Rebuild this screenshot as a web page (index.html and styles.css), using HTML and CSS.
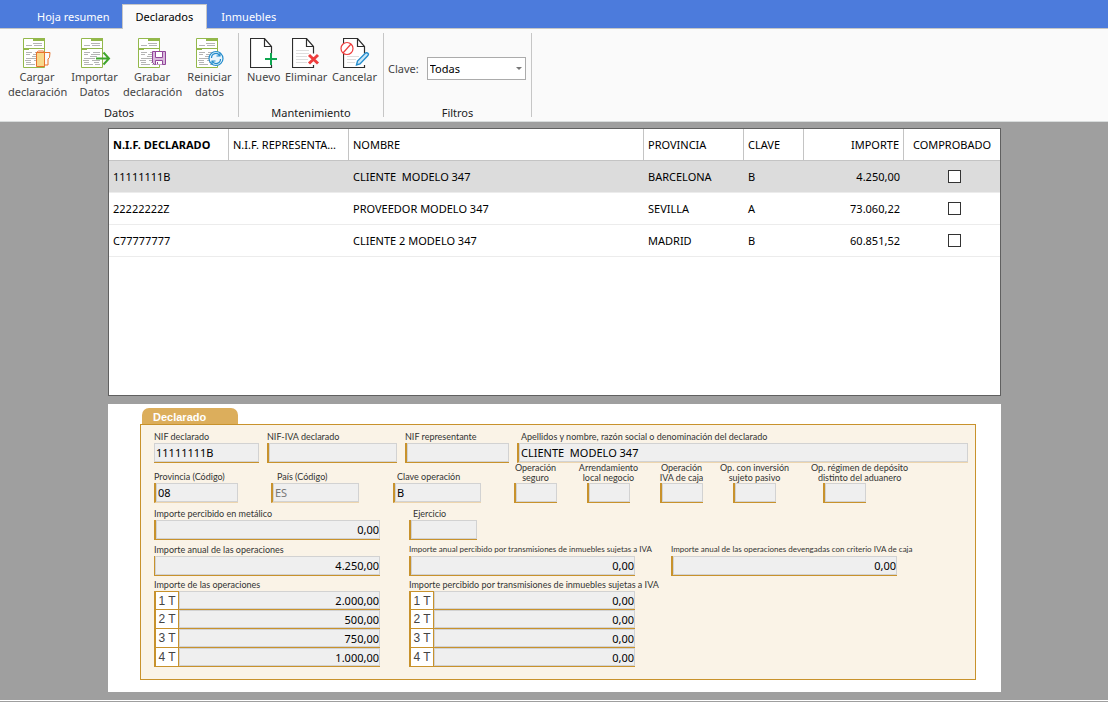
FILE: index.html
```html
<!DOCTYPE html>
<html lang="es">
<head>
<meta charset="utf-8">
<meta name="viewport" content="width=device-width, initial-scale=1">
<title>Modelo 347 - Declarados</title>
<link rel="stylesheet" href="styles.css">
</head>
<body>
<svg class="defs" aria-hidden="true">
  <symbol id="form-doc" viewBox="0 0 28 30">
    <path d="M.5.5h21v29H.5z" fill="#fff" stroke="#93b84b"/>
    <path d="M10 0h12v3H10zM0 10h22v1H0zM0 11h6v1H0z" fill="#93b84b"/>
    <path d="M10 5.5h9M3 7.5h6m2 0h8M3 14.5h6m3 0h7M3 16.5h4m3 0h9M9 18.5h7M3 20.5h11M2 22.5h6m3 0h8M3 24.5h5m5 0h5M3 26.5h9m2 0h5" fill="none" stroke="#b4b4b4"/>
  </symbol>
  <symbol id="blank-doc" viewBox="0 0 28 30">
    <path d="M.5.5h14l7 8v21H.5z" fill="#fff"/>
    <path d="M22 29.5H.5V.5h14l7 8v7M14.500.5v8h7M21.500 27v3" fill="none" stroke="#2d2d2d" stroke-width="1.200"/>
  </symbol>
</svg>

<header>
  <nav class="tabs">
    <a href="#resumen" class="tab">Hoja resumen</a>
    <a href="#declarados" class="tab active" aria-current="page">Declarados</a>
    <a href="#inmuebles" class="tab">Inmuebles</a>
  </nav>
  <div class="ribbon">
    <section class="group datos">
      <div class="tools">
        <button type="button" class="tool"><svg viewBox="0 0 28 30"><use href="#form-doc" width="28" height="30"/><path d="M13.500 14.500h8v14h-8z" fill="#f8d88b" stroke="#e8722c"/><path d="M13.500 14.500l2-1.500h5l1 1.500h5.500l-.5 5-1.500 1.500v6h-3.500" fill="none" stroke="#e8722c"/></svg>Cargar<br>declaración</button>
        <button type="button" class="tool"><svg viewBox="0 0 28 30"><use href="#form-doc" width="28" height="30"/><path d="M15 20.500h13M22.500 14.500l5.500 6-5.500 6" fill="none" stroke="#3fa52c" stroke-width="2"/></svg>Importar<br>Datos</button>
        <button type="button" class="tool"><svg viewBox="0 0 28 30"><use href="#form-doc" width="28" height="30"/><path d="M14.500 13.500h13v13h-11l-2-2z" fill="#d9b9dc" stroke="#91469a"/><path d="M17.500 13.500h7v6h-7zM17.500 26.500v-4h7v4" fill="#fff" stroke="#91469a"/><path d="M19 24h1v2h-1z" fill="#91469a"/></svg>Grabar<br>declaración</button>
        <button type="button" class="tool"><svg viewBox="0 0 28 30"><use href="#form-doc" width="28" height="30"/><circle cx="20" cy="20.500" r="7" fill="#e9f5fc" stroke="#238ccc" stroke-width="1.200"/><path d="M15.500 20c0-5 6-6 8-2.500M24 14.500v3.500h-3.500M24.500 21c0 5-6 6-8 2.500M16 26.500V23h3.500" fill="none" stroke="#238ccc" stroke-width="1.200"/></svg>Reiniciar<br>datos</button>
      </div>
      <h2>Datos</h2>
    </section>
    <section class="group mant">
      <div class="tools">
        <button type="button" class="tool"><svg viewBox="0 0 28 30"><use href="#blank-doc" width="28" height="30"/><path d="M15 21h12M21 15v12" stroke="#0ea650" stroke-width="2"/></svg>Nuevo</button>
        <button type="button" class="tool"><svg viewBox="0 0 28 30"><use href="#blank-doc" width="28" height="30"/><path d="M4 12.500h13M4 15.500h13M4 18.500h11M4 21.500h12M4 24.500h11" stroke="#dedede"/><path d="M17 17l9 8.500M26 17l-9 8.500" stroke="#ee3d3d" stroke-width="3"/></svg>Eliminar</button>
        <button type="button" class="tool"><svg viewBox="0 0 28 30"><use href="#blank-doc" x="2" width="28" height="30"/><path d="M6 18.500h12M6 21.500h9M6 24.500h8" stroke="#dedede"/><circle cx="6" cy="10.500" r="6" fill="#fff" stroke="#ee3d3d" stroke-width="1.200"/><path d="M2 15l8-9" stroke="#ee3d3d" stroke-width="1.200"/><path d="M15.500 27l1-4 8-8q2-1 3 1 0 1-1 2l-7.500 8z" fill="#c9e6f8" stroke="#238ccc" stroke-width="1.400"/></svg>Cancelar</button>
      </div>
      <h2>Mantenimiento</h2>
    </section>
    <section class="group filtros">
      <div class="filter">
        <label for="clave">Clave:</label>
        <span class="select"><select id="clave"><option>Todas</option></select></span>
      </div>
      <h2>Filtros</h2>
    </section>
  </div>
</header>

<main>
  <div class="grid-panel">
    <table>
      <colgroup><col class="c120"><col class="c120"><col><col class="c100"><col class="c60"><col class="c100"><col class="c96"></colgroup>
      <thead>
        <tr><th class="sorted">N.I.F. DECLARADO</th><th>N.I.F. REPRESENTANTE</th><th>NOMBRE</th><th>PROVINCIA</th><th>CLAVE</th><th class="num">IMPORTE</th><th class="check">COMPROBADO</th></tr>
      </thead>
      <tbody>
        <tr class="selected"><td>11111111B</td><td></td><td>CLIENTE&nbsp; MODELO 347</td><td>BARCELONA</td><td>B</td><td class="num">4.250,00</td><td class="check"><input type="checkbox" aria-label="Comprobado 11111111B"></td></tr>
        <tr><td>22222222Z</td><td></td><td>PROVEEDOR MODELO 347</td><td>SEVILLA</td><td>A</td><td class="num">73.060,22</td><td class="check"><input type="checkbox" aria-label="Comprobado 22222222Z"></td></tr>
        <tr><td>C77777777</td><td></td><td>CLIENTE 2 MODELO 347</td><td>MADRID</td><td>B</td><td class="num">60.851,52</td><td class="check"><input type="checkbox" aria-label="Comprobado C77777777"></td></tr>
      </tbody>
    </table>
  </div>

  <form class="card">
    <h1>Declarado</h1>
    <div class="sheet">
      <div class="row identity">
        <div class="field"><label for="nif">NIF declarado</label><input id="nif" class="flat" value="11111111B"></div>
        <div class="field"><label for="nifiva">NIF-IVA declarado</label><input id="nifiva"></div>
        <div class="field"><label for="nifrep">NIF representante</label><input id="nifrep"></div>
        <div class="field"><label for="nombre" class="nudge">Apellidos y nombre, razón social o denominación del declarado</label><input id="nombre" class="soft" value="CLIENTE&nbsp; MODELO 347"></div>
      </div>
      <div class="row operation">
        <div class="field w84"><label for="prov">Provincia (Código)</label><input id="prov" class="soft" value="08"></div>
        <div class="field w88"><label for="pais" class="inset">País (Código)</label><input id="pais" class="soft" value="ES" disabled></div>
        <div class="field w88"><label for="claveop" class="nudge">Clave operación</label><input id="claveop" class="soft" value="B"></div>
        <div class="field small"><label for="seguro">Operación<br>seguro</label><input id="seguro"></div>
        <div class="field small"><label for="arrend">Arrendamiento<br>local negocio</label><input id="arrend"></div>
        <div class="field small"><label for="caja">Operación<br>IVA de caja</label><input id="caja"></div>
        <div class="field small"><label for="inversion">Op. con inversión<br>sujeto pasivo</label><input id="inversion"></div>
        <div class="field small start"><label for="deposito">Op. régimen de depósito<br>distinto del aduanero</label><input id="deposito"></div>
      </div>
      <div class="row amounts cash">
        <div class="field"><label for="metalico">Importe percibido en metálico</label><input id="metalico" class="amount" value="0,00"></div>
        <div class="field w68"><label for="ejercicio" class="nudge">Ejercicio</label><input id="ejercicio"></div>
      </div>
      <div class="row amounts">
        <div class="field"><label for="anual">Importe anual de las operaciones</label><input id="anual" class="amount thin" value="4.250,00"></div>
        <div class="field"><label for="anualinm" class="long">Importe anual percibido por transmisiones de inmuebles sujetas a IVA</label><input id="anualinm" class="amount" value="0,00"></div>
        <div class="field"><label for="anualcaja" class="long">Importe anual de las operaciones devengadas con criterio IVA de caja</label><input id="anualcaja" class="amount" value="0,00"></div>
      </div>
      <div class="row amounts quarterly">
        <fieldset>
          <legend>Importe de las operaciones</legend>
          <div class="quarter"><label for="o1">1 T</label><input id="o1" class="amount" value="2.000,00"></div>
          <div class="quarter"><label for="o2">2 T</label><input id="o2" class="amount" value="500,00"></div>
          <div class="quarter"><label for="o3">3 T</label><input id="o3" class="amount" value="750,00"></div>
          <div class="quarter"><label for="o4">4 T</label><input id="o4" class="amount" value="1.000,00"></div>
        </fieldset>
        <fieldset>
          <legend>Importe percibido por transmisiones de inmuebles sujetas a IVA</legend>
          <div class="quarter"><label for="t1">1 T</label><input id="t1" class="amount" value="0,00"></div>
          <div class="quarter"><label for="t2">2 T</label><input id="t2" class="amount" value="0,00"></div>
          <div class="quarter"><label for="t3">3 T</label><input id="t3" class="amount" value="0,00"></div>
          <div class="quarter"><label for="t4">4 T</label><input id="t4" class="amount" value="0,00"></div>
        </fieldset>
      </div>
    </div>
  </form>
</main>
<footer></footer>
</body>
</html>
```
FILE: styles.css
```css
:root {
  --blue: #4c7bdc;
  --gold: #c8922c;
  --ui: "Noto Sans", "Open Sans", sans-serif;
  --label: Lato, "Liberation Sans", sans-serif;
}
* { box-sizing: border-box; }
body {
  margin: 0;
  min-height: 100vh;
  display: flex;
  flex-direction: column;
  background: #9f9f9f;
  color: #000;
  font: 11px/15px var(--ui);
}
h1, h2, fieldset, legend { margin: 0; padding: 0; border: 0; }
input, button, select { font: inherit; }
.defs { display: none; }

/* Ribbon */
.tabs {
  display: flex;
  align-items: flex-end;
  height: 28px;
  padding: 4px 0 0 22px;
  background: var(--blue);
}
.tab {
  height: 24px;
  padding: 5px 12px 0 15px;
  color: #fff;
  text-decoration: none;
}
.tab.active {
  height: 25px;
  margin-bottom: -1px;
  padding: 4px 13px 0;
  border: 1px solid #c6c6c6;
  border-bottom: 0;
  background: #fafafa;
  color: #000;
  position: relative;
}
.tab.active + .tab { padding-left: 14px; }
.ribbon {
  display: flex;
  height: 94px;
  padding: 4px 0;
  background: #fafafa;
  border-top: 1px solid #c6c6c6;
  border-bottom: 1px solid #d8dcdc;
}
.group {
  display: flex;
  flex-direction: column;
  justify-content: space-between;
  border-right: 1px solid #c6c6c6;
}
.group h2 {
  font-size: 11px;
  font-weight: 400;
  line-height: 9px;
  text-align: center;
  color: #222;
}
.datos { width: 239px; }
.mant { width: 145px; }
.filtros { width: 148px; }
.tools { display: flex; padding-top: 5px; }
.datos .tools { padding-left: 8px; }
.mant .tools { justify-content: space-between; padding: 5px 6px 0 8px; }
.tool {
  display: flex;
  flex-direction: column;
  align-items: center;
  padding: 0;
  border: 0;
  background: none;
  color: #444;
  line-height: 15px;
  text-align: center;
}
.tool svg { width: 28px; height: 30px; margin-bottom: 1px; overflow: visible; }
.datos .tool { display: block; width: 58px; white-space: nowrap; }
.datos .tool svg { display: block; margin: 0 auto 1px; }
.filter { display: flex; align-items: center; gap: 8px; padding: 24px 5px 0 4px; color: #444; }
.select { position: relative; flex: 1; display: flex; }
.select::after {
  content: "";
  position: absolute;
  right: 4px;
  top: 10px;
  border: 3px solid transparent;
  border-top: 3px solid #777;
  border-bottom: 0;
}
select {
  appearance: none;
  width: 100%;
  height: 23px;
  padding: 0 2px;
  border: 1px solid #ababab;
  border-radius: 0;
  background: #fff;
  color: #000;
}

/* Records */
main {
  flex: 1;
  display: flex;
  flex-direction: column;
  gap: 8px;
  padding: 6px 107px 8px 108px;
}
.grid-panel { flex: 1; border: 1px solid #606060; background: #fff; }
table { width: 100%; table-layout: fixed; border-collapse: separate; border-spacing: 0; font-size: 11px; }
.c120 { width: 120px; }
.c100 { width: 100px; }
.c96 { width: 96px; }
.c60 { width: 60px; }
th, td {
  height: 32px;
  padding: 0 4px;
  border-bottom: 1px solid #ececec;
  font-weight: 400;
  text-align: left;
  white-space: nowrap;
  overflow: hidden;
  text-overflow: ellipsis;
}
th { border-bottom-color: #c4c4c4; border-right: 1px solid #c4c4c4; }
th:last-child { border-right: 0; }
.sorted { font-weight: 700; }
.selected td { background: #dcdcdc; }
.num { text-align: right; }
.check { text-align: center; }
td.check { padding-left: 8px; }
.check input {
  appearance: none;
  display: block;
  width: 13px;
  height: 13px;
  margin: 0 auto;
  border: 1px solid #333;
  background: #fff;
}

/* Form */
.card { padding: 4px 25px 12px 32px; background: #fff; }
h1 {
  width: 96px;
  height: 16px;
  margin-left: 2px;
  padding-left: 11px;
  border-radius: 7px 7px 0 0;
  background: #dcae5c;
  color: #fff;
  font: 700 11px/18px "Liberation Sans", sans-serif;
}
.sheet { padding: 5px 7px 12px 13px; border: 1px solid var(--gold); background: #faf3e7; }
.row { display: grid; }
.identity { grid-template-columns: 105px 130px 104px 1fr; column-gap: 8px; }
.operation { grid-template-columns: 117px 122px 105px 73px 73px 73px 94px 1fr; align-items: end; }
.amounts { grid-template-columns: 255px 262px 1fr; margin-top: 3px; }
.cash { margin-top: 4px; }
.quarterly { margin-top: 2px; }
.field { display: flex; flex-direction: column; }
.field label, legend {
  color: #333;
  font: 9px/13px var(--label);
  white-space: nowrap;
}
.field .long { font-size: 8px; }
.amounts .field, fieldset { width: 226px; min-width: 0; }
.w84 { width: 84px; }
.w88 { width: 88px; }
.amounts .w68 { width: 68px; }
.field .inset { padding-left: 6px; }
.field .nudge { padding-left: 4px; }
.small { width: 75px; align-items: center; }
.field.small label { line-height: 10px; text-align: center; }
.field.small input { width: 43px; }
.start { width: auto; align-items: flex-start; }
.field.start input { margin-left: 12px; }
.field input, .quarter input {
  width: 100%;
  min-width: 0;
  height: 20px;
  padding: 0 2px;
  border: 0 solid var(--gold);
  border-width: 0 0 1px 2px;
  border-radius: 0;
  background: #efefef;
  box-shadow: inset 0 0 0 1px #d2d2d2;
  color: #000;
}
.field input.flat { border-left-width: 0; }
.field input.thin { border-left-width: 1px; }
.field input.soft { border-bottom-color: #edd5ae; }
.field input:disabled { color: #777; }
.field input.amount, .quarter input.amount { padding-right: 1px; text-align: right; }
.quarter { display: flex; height: 19px; border-bottom: 1px solid var(--gold); }
.quarter label {
  flex: none;
  width: 25px;
  border: 1px solid var(--gold);
  border-width: 0 1px 0 2px;
  background: #fff;
  color: #444;
  font: 12px/18px "Liberation Sans", sans-serif;
  text-align: center;
}
legend + .quarter label { border-top-width: 1px; }
.quarter input { height: 18px; border-width: 0; }
footer { height: 2px; border-top: 1px solid #fff; background: #9f9f9f; }
```
